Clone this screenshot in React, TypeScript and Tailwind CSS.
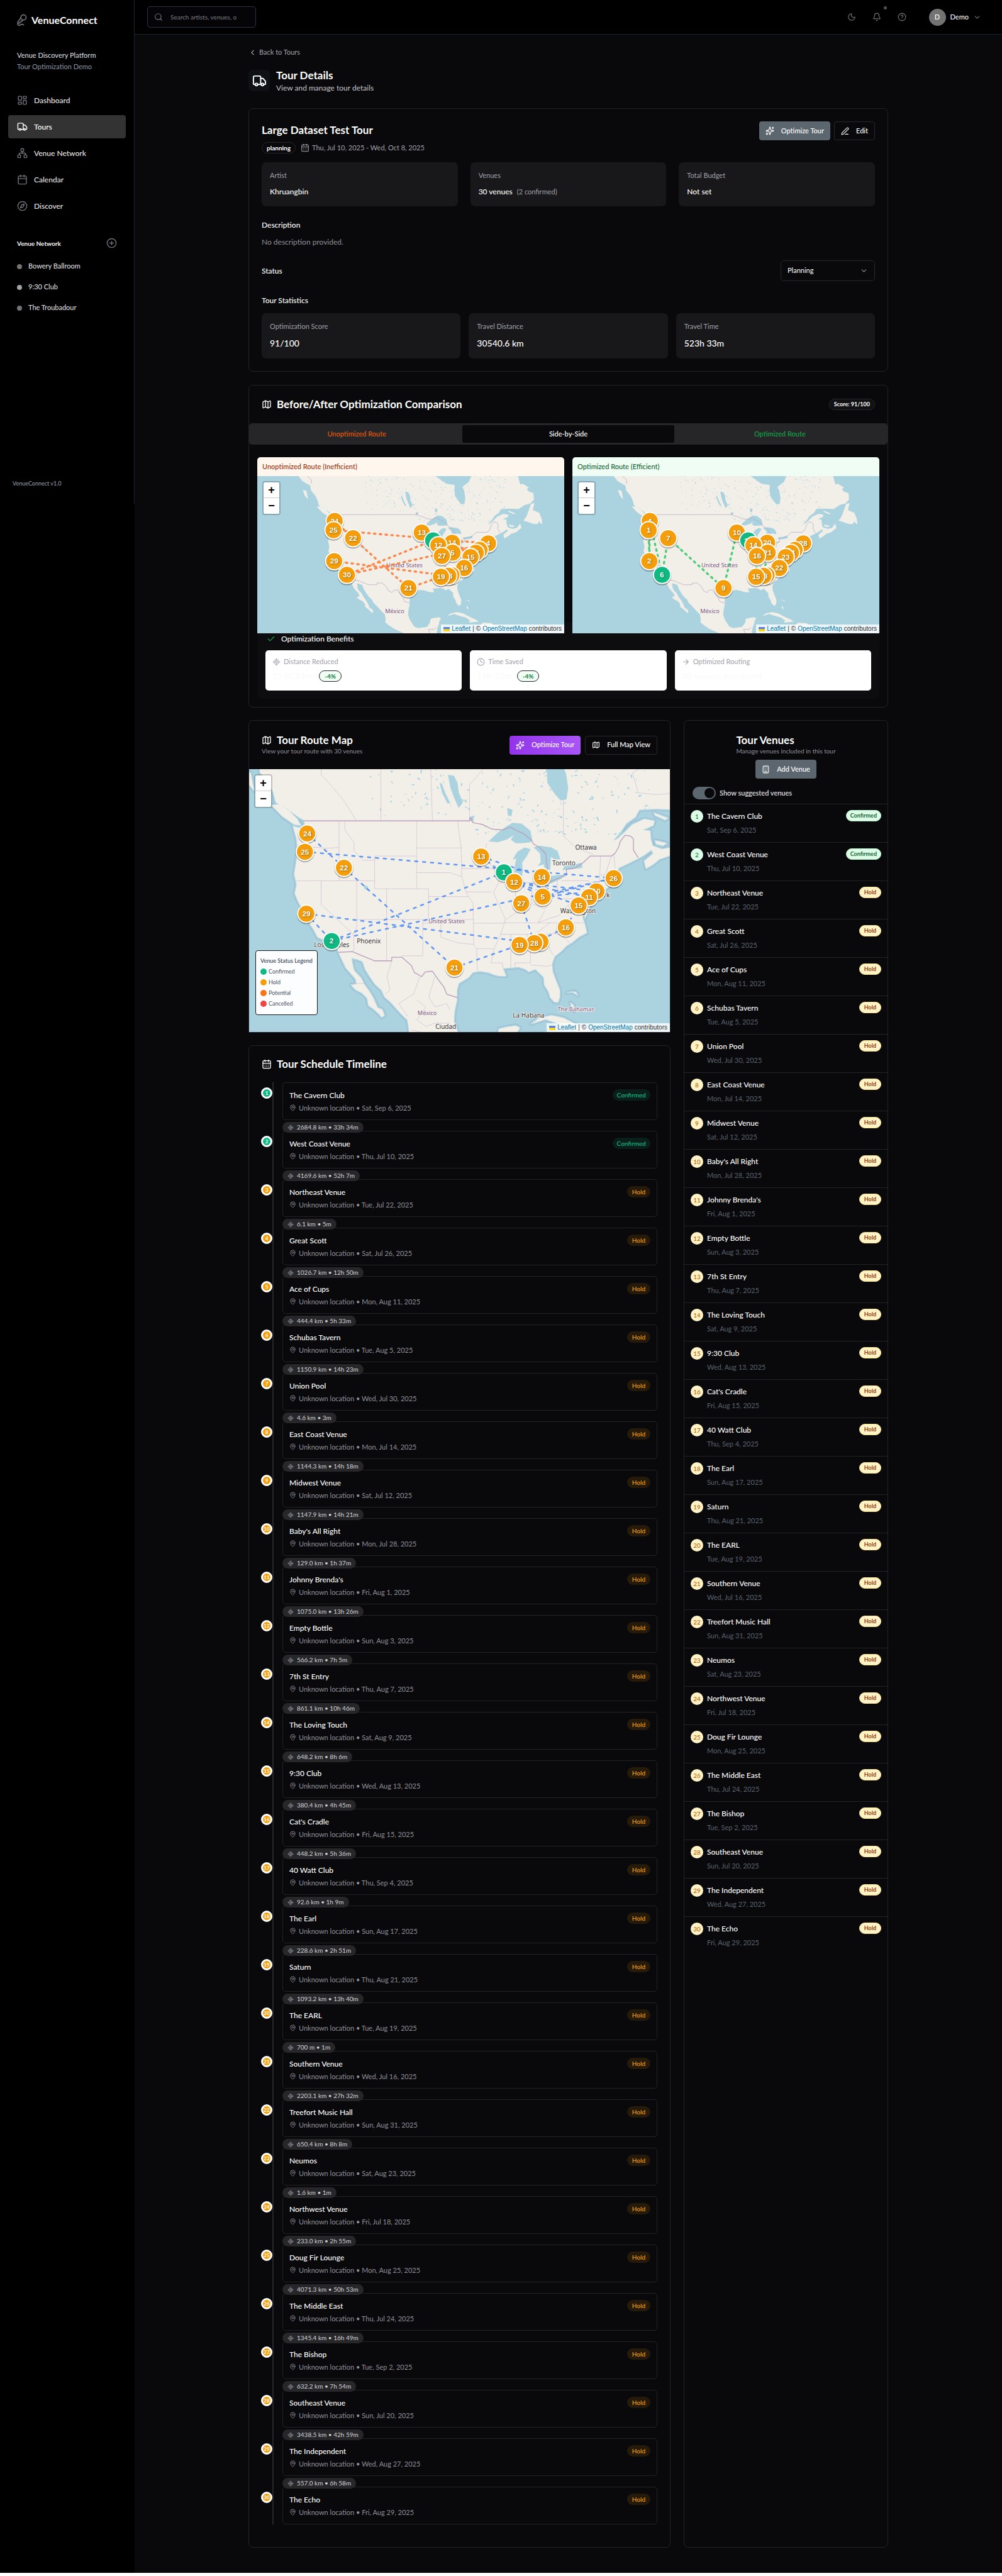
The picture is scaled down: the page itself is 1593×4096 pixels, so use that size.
import React from "react";
import {
  ArrowRight,
  Bell,
  Building,
  Calendar,
  CalendarDays,
  Check,
  ChevronDown,
  ChevronLeft,
  CircleHelp,
  CirclePlus,
  Clock,
  Compass,
  LayoutDashboard,
  LocateFixed,
  Map as MapIcon,
  MapPin,
  MicVocal,
  Moon,
  Network,
  PenLine,
  Search,
  Sparkles,
  Truck,
} from "lucide-react";

type Venue = { name: string; date: string; leg?: string };

const venues: Venue[] = [
  { name: "The Cavern Club", date: "Sat, Sep 6, 2025", leg: "2684.8 km • 33h 34m" },
  { name: "West Coast Venue", date: "Thu, Jul 10, 2025", leg: "4169.6 km • 52h 7m" },
  { name: "Northeast Venue", date: "Tue, Jul 22, 2025", leg: "6.1 km • 5m" },
  { name: "Great Scott", date: "Sat, Jul 26, 2025", leg: "1026.7 km • 12h 50m" },
  { name: "Ace of Cups", date: "Mon, Aug 11, 2025", leg: "444.4 km • 5h 33m" },
  { name: "Schubas Tavern", date: "Tue, Aug 5, 2025", leg: "1150.9 km • 14h 23m" },
  { name: "Union Pool", date: "Wed, Jul 30, 2025", leg: "4.6 km • 3m" },
  { name: "East Coast Venue", date: "Mon, Jul 14, 2025", leg: "1144.3 km • 14h 18m" },
  { name: "Midwest Venue", date: "Sat, Jul 12, 2025", leg: "1147.9 km • 14h 21m" },
  { name: "Baby's All Right", date: "Mon, Jul 28, 2025", leg: "129.0 km • 1h 37m" },
  { name: "Johnny Brenda's", date: "Fri, Aug 1, 2025", leg: "1075.0 km • 13h 26m" },
  { name: "Empty Bottle", date: "Sun, Aug 3, 2025", leg: "566.2 km • 7h 5m" },
  { name: "7th St Entry", date: "Thu, Aug 7, 2025", leg: "861.1 km • 10h 46m" },
  { name: "The Loving Touch", date: "Sat, Aug 9, 2025", leg: "648.2 km • 8h 6m" },
  { name: "9:30 Club", date: "Wed, Aug 13, 2025", leg: "380.4 km • 4h 45m" },
  { name: "Cat's Cradle", date: "Fri, Aug 15, 2025", leg: "448.2 km • 5h 36m" },
  { name: "40 Watt Club", date: "Thu, Sep 4, 2025", leg: "92.6 km • 1h 9m" },
  { name: "The Earl", date: "Sun, Aug 17, 2025", leg: "228.6 km • 2h 51m" },
  { name: "Saturn", date: "Thu, Aug 21, 2025", leg: "1093.2 km • 13h 40m" },
  { name: "The EARL", date: "Tue, Aug 19, 2025", leg: "700 m • 1m" },
  { name: "Southern Venue", date: "Wed, Jul 16, 2025", leg: "2203.1 km • 27h 32m" },
  { name: "Treefort Music Hall", date: "Sun, Aug 31, 2025", leg: "650.4 km • 8h 8m" },
  { name: "Neumos", date: "Sat, Aug 23, 2025", leg: "1.6 km • 1m" },
  { name: "Northwest Venue", date: "Fri, Jul 18, 2025", leg: "233.0 km • 2h 55m" },
  { name: "Doug Fir Lounge", date: "Mon, Aug 25, 2025", leg: "4071.3 km • 50h 53m" },
  { name: "The Middle East", date: "Thu, Jul 24, 2025", leg: "1345.4 km • 16h 49m" },
  { name: "The Bishop", date: "Tue, Sep 2, 2025", leg: "632.2 km • 7h 54m" },
  { name: "Southeast Venue", date: "Sun, Jul 20, 2025", leg: "3438.5 km • 42h 59m" },
  { name: "The Independent", date: "Wed, Aug 27, 2025", leg: "557.0 km • 6h 58m" },
  { name: "The Echo", date: "Fri, Aug 29, 2025" },
];

/* ---------- Map geometry: flat lists of lon,lat pairs ---------- */

const MAINLAND = [
  -136, 60, -136, 58, -134.5, 56.8, -133, 55.8, -130.5, 55, -130.2, 54, -128.8, 53, -128, 52, -127.6, 51, -125.5, 50.2,
  -124, 49.5, -123, 49.1, -122.5, 48.3, -122.3, 47.3, -122.8, 47.3, -122.9, 48.1, -124.7, 48.4, -124.1, 46.9, -124, 46.2,
  -124.1, 44.6, -124.5, 42.8, -124.1, 41.5, -124.4, 40.4, -123.8, 39.3, -123, 38.2, -122.5, 37.7, -121.9, 36.9, -121.9, 36.4,
  -121.3, 35.7, -120.6, 34.6, -119.2, 34.1, -118.4, 33.8, -117.3, 33, -117.1, 32.5, -116.6, 31.6, -115.9, 30.3, -115, 29.4,
  -114.2, 28.6, -114.1, 27.9, -115, 27.8, -114.3, 27.1, -113.2, 26.6, -112.3, 25.8, -112.1, 24.7, -111.3, 24.2, -110.3, 23.4,
  -109.9, 22.9, -109.4, 23.2, -109.8, 24.1, -110.6, 24.4, -111.2, 25.7, -111.9, 26.8, -112.8, 27.9, -113.3, 28.8,
  -114.5, 29.9, -114.8, 31, -114.9, 31.7, -114, 31.5, -113.1, 31.2, -112.6, 30, -111.8, 28.9, -111, 27.9, -109.9, 27,
  -109.4, 26, -108.4, 25.2, -107.6, 24.4, -106.5, 23.3, -105.6, 22.5, -105.4, 21.5, -105.3, 20.6, -105.5, 20, -104.3, 19.1,
  -102.5, 18, -100.8, 17.2, -99.5, 16.7, -97.5, 15.9, -96, 15.7, -94.8, 16.2, -93.5, 15.6, -92.2, 14.5, -91, 13.9, -88, 13,
  -86, 11, -83.5, 11, -83.2, 14.9, -84.5, 15.8, -86.5, 15.8, -88.3, 15.7, -88.2, 17, -88, 18.4, -87.5, 19.5, -87.4, 20.3,
  -86.8, 21.3, -87.5, 21.6, -89, 21.4, -90.3, 21.1, -90.5, 19.9, -91.5, 18.6, -93, 18.4, -94.5, 18.2, -95.8, 18.7,
  -96.4, 19.6, -97.2, 20.7, -97.8, 22.3, -97.7, 23.8, -97.3, 25.5, -97.3, 27, -97, 28, -95.3, 28.9, -94.7, 29.6, -93.5, 29.8,
  -92, 29.6, -91.2, 29.3, -90.2, 29.1, -89.1, 29.1, -89.6, 30.2, -88.1, 30.3, -87, 30.4, -85.9, 30.1, -85.3, 29.7,
  -84.2, 30.1, -83.5, 29.5, -82.8, 28.9, -82.7, 27.8, -82, 26.8, -81.7, 25.9, -81, 25.2, -80.4, 25.2, -80.1, 26, -80.1, 27,
  -80.7, 28.3, -81.3, 29.7, -81.4, 30.9, -81, 31.9, -79.8, 32.7, -79, 33.4, -78, 33.9, -77, 34.6, -75.6, 35.2, -76, 36.6,
  -76.3, 37.2, -76.3, 38.6, -76.1, 38.2, -75.9, 37.2, -75.6, 37.7, -75.1, 38.6, -75.5, 39.4, -74.9, 39, -74.1, 39.8, -74, 40.6,
  -72.5, 40.9, -71.9, 41.3, -70.6, 41.6, -70, 41.8, -70.6, 42.3, -70.8, 42.9, -70.2, 43.6, -69, 44, -67, 44.7, -66, 45.1,
  -64.8, 45.7, -64.5, 45.3, -66, 44.4, -65.7, 43.5, -64.5, 44, -63.5, 44.6, -61.5, 45.1, -61, 45.5, -60, 46, -60.4, 47,
  -61.5, 46, -63, 45.8, -64.6, 46.2, -64.9, 47, -65, 47.9, -66.2, 48, -64.5, 48.5, -64.3, 49, -66, 49.2, -68, 48.6,
  -69.5, 47.6, -70.5, 47, -71.2, 46.8, -70, 47.7, -69, 48.7, -67.5, 49.4, -66.8, 50.2, -64, 50.3, -61, 50.2, -58.8, 51.1,
  -57, 51.4, -55.8, 52.2, -56, 53.5, -57.5, 53.8, -58.2, 54.3, -57.5, 54.6, -59.5, 55.3, -60.4, 55.2, -61, 56.5, -62, 58, -62, 60,
];

const ISLANDS = [
  [-128.3, 50.7, -127, 50.8, -125.3, 50.1, -124, 49.2, -123.4, 48.5, -124.5, 48.6, -126.5, 49.5],
  [-133, 54.1, -131.8, 54, -131.2, 52.2, -132.3, 53],
  [-59.3, 47.7, -58.3, 48.6, -57.5, 50, -56.8, 51.3, -55.6, 51.5, -56.2, 50, -54, 49.4, -53.2, 48, -53, 46.8, -54.2, 47.5, -54.5, 46.9, -55.8, 46.9],
  [-84.9, 21.9, -83.5, 22.8, -81.5, 23.2, -79.5, 22.8, -77, 21.6, -75.5, 21, -74.2, 20.2, -77.5, 19.9, -77.2, 20.6, -78.5, 21.5, -81, 22.1, -82.5, 22.6, -83.8, 22.2],
  [-74.4, 18.4, -72.8, 19.9, -70, 19.7, -68.4, 18.6, -70.5, 18.2, -72, 18.2],
  [-78.3, 18.4, -76.8, 18.4, -76.5, 17.9, -77.7, 17.9],
  [-78.3, 25.1, -77.8, 24.7, -77.7, 23.9, -78.2, 24.4],
  [-78.9, 26.6, -77.9, 26.7, -77.1, 26.2, -77.4, 26.7, -78, 26.8],
  [-64.4, 49.9, -62, 49.3, -62.5, 49.1, -64.2, 49.6],
  [-64.2, 46.8, -62.2, 46.5, -62.9, 46.2, -64, 46.4],
];

const WATER = [
  [-94.5, 60, -94.3, 58.8, -93, 58.6, -92.5, 57, -90, 57.2, -88, 56.5, -85, 55.3, -82.3, 55.1, -82.2, 53, -81, 51.9, -80, 51.2, -79, 51.3, -78.7, 52.5, -79.1, 54, -79.7, 54.7, -77.5, 55.7, -76.6, 57, -77.5, 58.5, -78, 60],
  [-92, 46.7, -90.5, 47.7, -89, 48.4, -88, 48.8, -86.5, 48.7, -85, 47.9, -84.7, 46.8, -85, 46.6, -86.5, 46.5, -87.5, 46.5, -88.3, 46.9, -87.8, 47.4, -89, 46.9, -90.5, 46.6],
  [-87.8, 42.2, -87.2, 41.7, -86.5, 42.2, -86.3, 43.2, -86.4, 44.2, -85.6, 45, -85, 45.8, -86, 46, -87.2, 45.5, -88, 44.6, -87.4, 44.7, -87.7, 43.6],
  [-84.5, 46, -83.4, 45.3, -83.3, 44.3, -83.8, 43.8, -82.8, 44, -82.5, 43.1, -81.7, 43.4, -81.6, 44.9, -81, 44.6, -80, 44.6, -80.5, 45.6, -81.5, 46, -83.5, 46.2],
  [-83.4, 41.8, -82.5, 41.5, -81.5, 41.7, -80, 42.2, -78.9, 42.8, -80.3, 42.7, -81.5, 42.6, -82.6, 42],
  [-79.7, 43.3, -78, 43.4, -76.3, 43.6, -76.5, 44.2, -78, 43.9, -79.3, 43.8],
  [-97, 50.4, -96.3, 51, -97, 52, -97.2, 53, -97.8, 53.7, -98.8, 53.8, -98.4, 52.5, -97.8, 51.5],
  [-100.2, 53, -99.8, 52.9, -99.2, 51.9, -98.4, 50.9, -98.9, 50.9, -99.8, 52],
  [-112.9, 41.5, -112.2, 41.3, -112.2, 40.8, -112.8, 41],
  [-95.2, 49.4, -94.4, 49.6, -94.6, 48.9, -95.2, 49],
  [-88.9, 50.4, -88, 50.2, -88.2, 49.5, -88.8, 49.6],
];

const BORDERS = [
  [-123, 49, -95.2, 49, -95.1, 49.4, -94.6, 48.8, -93, 48.6, -91.5, 48.1, -89.6, 48, -88.4, 48.3, -86, 47.5, -84.8, 46.8, -84.5, 46.4, -83.5, 46, -82.5, 45.3, -82.2, 43.6, -82.5, 42.6, -83.1, 42.1, -82, 41.8, -79, 42.7, -79, 43.4, -77.5, 43.6, -76.4, 44.1, -75, 45, -71.5, 45, -70.9, 45.3, -70.3, 46, -70, 46.7, -69.2, 47.4, -68.3, 47.3, -67.8, 47, -67.8, 45.7, -67, 44.8],
  [-117.1, 32.5, -114.8, 32.6, -111.1, 31.3, -108.2, 31.3, -108.2, 31.8, -106.5, 31.8, -104.9, 30.6, -104.4, 29.6, -103.2, 29, -102.6, 29.7, -101.4, 29.8, -100.3, 28.4, -99.5, 27.5, -99, 26.4, -97.2, 25.9],
  [-92.2, 14.5, -91.8, 16.1, -90.4, 16.1, -91, 17.8, -89.1, 17.8, -88.4, 18.5],
  [-130.2, 55.3, -130, 56, -132, 57, -133.5, 58.5, -135, 59.5],
];

const STATES = [
  [-124, 46.2, -119, 45.9, -117, 46],
  [-117, 49, -117, 42],
  [-124.2, 42, -111, 42],
  [-120, 42, -120, 39, -114.6, 35, -114.5, 33, -114.8, 32.5],
  [-114.05, 42, -114.05, 36, -114.6, 35],
  [-114.05, 37, -94.6, 37],
  [-109.05, 41, -109.05, 31.3],
  [-111.05, 45, -111.05, 41, -102.05, 41],
  [-111.05, 45, -104.05, 45],
  [-116.05, 49, -116.05, 48, -114.5, 46.6, -114.5, 45.6, -113, 44.5, -111.05, 44.5],
  [-104.05, 49, -104.05, 41],
  [-104.05, 45.94, -96.5, 45.94],
  [-104.05, 43, -98.5, 43, -96.5, 42.5, -95.8, 40.6, -94.6, 39.1],
  [-102.05, 40, -95.3, 40],
  [-102.05, 41, -102.05, 37],
  [-103, 37, -103, 32, -106.6, 32],
  [-103, 36.5, -100, 36.5, -100, 34.6, -97, 33.8, -94.5, 33.6],
  [-97.2, 49, -96.6, 46, -96.5, 42.5],
  [-96.5, 43.5, -91.2, 43.5],
  [-95.8, 40.6, -91.5, 40.6],
  [-94.6, 36.5, -89.5, 36.5],
  [-94.6, 39.1, -94.5, 33.6, -94, 33, -93.9, 29.8],
  [-92.3, 46.5, -92.8, 45, -91.2, 43.5, -90.2, 42, -91.2, 40.5, -90.2, 38.8, -89.2, 37, -90, 35, -91.1, 33, -91.6, 31, -89.7, 31, -89.6, 30.2],
  [-94, 33, -91.1, 33],
  [-90.6, 42.5, -87.8, 42.5],
  [-87.5, 41.7, -87.5, 38],
  [-89.1, 37, -87.5, 37.9, -85.7, 38.2, -84.8, 39.1, -82.6, 38.4, -80.6, 40.6],
  [-84.8, 41.7, -84.8, 39.1],
  [-87, 41.75, -83.4, 41.75],
  [-80.52, 42, -80.52, 39.72, -75.6, 39.72],
  [-79.8, 42, -75.3, 42, -74.7, 41.4, -75.2, 40],
  [-89.5, 36.55, -75.9, 36.55],
  [-90, 35, -83.2, 35, -81, 35.1, -79.6, 34.8, -78.5, 33.8],
  [-88.3, 35, -88.3, 30.3],
  [-85.6, 35, -85, 32.3, -85, 31, -87.6, 31, -87.6, 30.3],
  [-85, 30.7, -82.2, 30.5, -81.4, 30.7],
  [-83.2, 35, -81.2, 32.1],
  [-84.3, 35, -81.7, 36.6],
  [-82.6, 38.2, -83.7, 36.6, -81.7, 37.2, -80.3, 37.5, -79, 38.7, -77.8, 39.3],
  [-71.5, 45, -72.5, 42.7],
  [-73.3, 45, -73.5, 41.1],
  [-73.3, 42.7, -71, 42.8],
  [-73.4, 42.03, -71.8, 42.03, -71.8, 41.4],
  [-71.1, 45.3, -70.8, 43.1],
  [-120, 60, -120, 53.8, -118, 52.5, -116, 51, -114.1, 49],
  [-110, 60, -110, 49],
  [-102, 60, -101.4, 49],
  [-95.2, 49, -95.2, 52.8, -92, 55, -88.9, 56.9],
  [-79.5, 51.3, -79.5, 47.3, -77.3, 45.9, -74.5, 45.2],
  [-67.5, 52, -64, 51.8, -60, 52, -57, 51.5],
  [-67, 52, -68, 54, -65, 55],
  [-108.2, 31.3, -109, 29, -108.5, 27, -109.3, 26.4],
  [-103.5, 29, -104.5, 26.5, -107, 25, -105.5, 23],
  [-101, 29, -102, 26, -101, 24.5, -99, 25, -98.5, 24],
  [-104, 25.5, -102.5, 24.5, -104, 22.5, -102.5, 21.5, -101, 22, -98.5, 22],
  [-105, 21, -103, 20.5, -101.5, 20, -100, 20.5, -98.5, 19.5, -97, 19],
  [-114.9, 28, -112.8, 28],
];

const project = (lon: number, lat: number): [number, number] => [
  110.9 + (lon + 122.33) * 11.378,
  122.4 + (0.947 - Math.asinh(Math.tan((lat * Math.PI) / 180))) * 651.9,
];

const pathOf = (flat: number[], close: boolean) => {
  let d = "";
  for (let i = 0; i < flat.length; i += 2) {
    const [x, y] = project(flat[i], flat[i + 1]);
    d += (i ? "L" : "M") + x.toFixed(1) + " " + y.toFixed(1);
  }
  return close ? d + "Z" : d;
};

/* Scattered small lakes of the Canadian Shield */
const lakes = (() => {
  let seed = 7;
  const next = () => {
    seed = (seed * 16807) % 2147483647;
    return seed / 2147483647;
  };
  const list: { x: number; y: number; rx: number; ry: number; a: number }[] = [];
  for (let i = 0; i < 300; i++) {
    const lat = 47.5 + next() * 10;
    const lon = lat < 49.5 ? -94 + next() * 24 : -112 + next() * 47;
    const [x, y] = project(lon, lat);
    list.push({ x, y, rx: 0.8 + next() * 3, ry: 0.5 + next() * 1.1, a: next() * 180 });
  }
  return list;
})();

const sites: Record<string, [number, number]> = {
  seattle: [110.9, 122.4],
  portland: [106.6, 157.2],
  boise: [180.8, 187.6],
  sf: [109.3, 275],
  la: [157.5, 326.8],
  minneapolis: [441.7, 166.3],
  milwaukee: [485, 196.3],
  detroit: [557, 205],
  chicago: [504.7, 214.5],
  boston: [693.7, 207.4],
  newyork: [661, 232.3],
  philly: [647, 243.4],
  columbus: [558.7, 242.6],
  bloomington: [518, 255.2],
  dc: [627, 259.2],
  carrboro: [602.7, 301],
  athens: [554.5, 328],
  atlanta: [542.8, 330.8],
  birmingham: [514.8, 334.3],
  austin: [391, 377.4],
};

type Label = [site: string, text: string, green?: boolean];
type Leg = [string, string];

const fullLabels: Label[] = [
  ["seattle", "24"], ["portland", "25"], ["boise", "22"], ["sf", "29"], ["la", "2", true], ["minneapolis", "13"],
  ["milwaukee", "1", true], ["detroit", "14"], ["chicago", "12"], ["boston", "26"], ["newyork", "10"],
  ["columbus", "5"], ["philly", "11"], ["bloomington", "27"], ["dc", "15"], ["carrboro", "16"], ["athens", ""], ["atlanta", "28"],
  ["birmingham", "19"], ["austin", "21"],
];
const beforeLabels: Label[] = [
  ["seattle", "24"], ["portland", "25"], ["boise", "22"], ["sf", "29"], ["la", "30"], ["minneapolis", "13"],
  ["milwaukee", "", true], ["detroit", "14"], ["chicago", "12"], ["boston", "4"], ["newyork", ""],
  ["columbus", "5"], ["philly", "11"], ["bloomington", "27"], ["dc", "15"], ["carrboro", "16"], ["athens", ""], ["atlanta", "18"],
  ["birmingham", "19"], ["austin", "21"],
];
const afterLabels: Label[] = [
  ["seattle", "4"], ["portland", "1"], ["boise", "7"], ["sf", "2"], ["la", "6", true], ["minneapolis", "10"],
  ["milwaukee", "12", true], ["detroit", "20"], ["chicago", "14"], ["boston", "28"], ["newyork", ""],
  ["columbus", "21"], ["philly", "24"], ["bloomington", "16"], ["dc", "23"], ["carrboro", "22"], ["athens", ""], ["atlanta", "18"],
  ["birmingham", "15"], ["austin", "9"],
];

const fullLegs: Leg[] = [
  ["seattle", "boise"], ["boise", "austin"], ["austin", "birmingham"], ["portland", "boston"], ["milwaukee", "la"],
  ["la", "boston"], ["sf", "la"], ["sf", "atlanta"], ["bloomington", "atlanta"], ["atlanta", "carrboro"], ["carrboro", "dc"],
  ["minneapolis", "chicago"], ["minneapolis", "detroit"], ["chicago", "dc"], ["chicago", "newyork"], ["chicago", "columbus"],
  ["chicago", "philly"], ["columbus", "newyork"], ["columbus", "boston"],
];
const afterLegs: Leg[] = [
  ["portland", "sf"], ["seattle", "sf"], ["seattle", "la"], ["la", "boise"], ["boise", "austin"], ["austin", "minneapolis"],
  ["bloomington", "birmingham"], ["chicago", "atlanta"], ["columbus", "atlanta"], ["columbus", "carrboro"], ["dc", "boston"],
];

type PlaceLabel = { x: number; y: number; text: string; country?: boolean };

function RouteMap({
  width,
  height,
  scale,
  labels,
  legs,
  color,
  places,
  detail,
  title,
}: {
  width: number;
  height: number;
  scale: number;
  labels: Label[];
  legs: Leg[];
  color: string;
  places: PlaceLabel[];
  detail?: boolean;
  title: string;
}) {
  const ox = scale === 1 ? 0 : 147 - 110.9 * scale;
  const oy = scale === 1 ? 0 : 85.5 - 122.4 * scale;
  const at = (site: string) => [ox + sites[site][0] * scale, oy + sites[site][1] * scale];
  return (
    <svg viewBox={`0 0 ${width} ${height}`} preserveAspectRatio="xMidYMid slice" className="block h-full w-full" role="img" aria-label={title}>
      <rect width={width} height={height} fill="#aad3df" />
      <g transform={`translate(${ox} ${oy}) scale(${scale})`} strokeLinejoin="round">
        {detail && (
          <g fill="none" stroke="#8f9fc4" strokeWidth="7" opacity="0.75">
            {[MAINLAND, ...ISLANDS].map((s, i) => (
              <path key={i} d={pathOf(s, true)} />
            ))}
          </g>
        )}
        {detail && (
          <g fill="none" stroke="#aad3df" strokeWidth="5.4">
            {[MAINLAND, ...ISLANDS].map((s, i) => (
              <path key={i} d={pathOf(s, true)} />
            ))}
          </g>
        )}
        <g fill="#f2efe9">
          {[MAINLAND, ...ISLANDS].map((s, i) => (
            <path key={i} d={pathOf(s, true)} />
          ))}
        </g>
        <g fill="#aad3df">
          {lakes.map((l, i) => (
            <ellipse key={i} cx={l.x} cy={l.y} rx={l.rx} ry={l.ry} transform={`rotate(${l.a} ${l.x} ${l.y})`} />
          ))}
          {WATER.map((s, i) => (
            <path key={i} d={pathOf(s, true)} />
          ))}
        </g>
        {detail && (
          <g fill="none" stroke="#c9b3cc" strokeWidth="0.9" opacity="0.8">
            {STATES.map((s, i) => (
              <path key={i} d={pathOf(s, false)} />
            ))}
          </g>
        )}
        <g fill="none" stroke="#b99fbd" strokeWidth={1.6}>
          {BORDERS.map((s, i) => (
            <path key={i} d={pathOf(s, false)} />
          ))}
        </g>
      </g>
      <g fontFamily='"Noto Sans", sans-serif' textAnchor="middle" stroke="#f7f5f1" strokeWidth="2" paintOrder="stroke">
        {places.map((p) => (
          <text key={p.text} x={p.x} y={p.y + 4} fontSize={p.country ? 11 : 12} fill={p.country ? "#7d5580" : "#333333"}>
            {p.text}
          </text>
        ))}
      </g>
      <g stroke={color} strokeWidth={detail ? 3 : 4} strokeLinecap="round" strokeDasharray={detail ? "5 10" : "3 8"} opacity="0.8">
        {legs.map(([a, b], i) => {
          const [x1, y1] = at(a);
          const [x2, y2] = at(b);
          return <line key={i} x1={x1} y1={y1} x2={x2} y2={y2} />;
        })}
      </g>
      {labels.map(([site, text, green]) => {
        const [x, y] = at(site);
        return (
          <g key={site}>
            <circle cx={x} cy={y + 2.5} r="17.5" fill="#000" opacity="0.2" />
            <circle cx={x} cy={y + 1} r="18.5" fill="#000" opacity="0.15" />
            <circle cx={x} cy={y} r="16.5" fill={green ? "#10b981" : "#f59e0b"} stroke="#fff" strokeWidth="2.4" />
            {text && (
              <text
                x={x}
                y={y + 5}
                fontSize="14"
                fontWeight="700"
                textAnchor="middle"
                fontFamily='"Liberation Sans", sans-serif'
                fill="#fff"
                className="[filter:drop-shadow(1px_1px_1px_rgba(0,0,0,0.4))]"
              >
                {text}
              </text>
            )}
          </g>
        );
      })}
    </svg>
  );
}

function MapControls() {
  return (
    <>
      <div className="absolute top-2 left-2 flex flex-col overflow-hidden rounded-[4px] border-2 border-black/20 bg-clip-padding">
        <button type="button" aria-label="Zoom in" className="flex h-[25px] w-[25px] items-center justify-center border-b border-[#cccccc] bg-white font-['Liberation_Sans',sans-serif] text-[18px] font-bold text-black">
          +
        </button>
        <button type="button" aria-label="Zoom out" className="flex h-[25px] w-[25px] items-center justify-center bg-white font-['Liberation_Sans',sans-serif] text-[18px] font-bold text-black">
          −
        </button>
      </div>
      <div className="absolute right-0 bottom-0 flex h-[14px] items-center gap-[3px] bg-white/80 px-1 font-['Liberation_Sans',sans-serif] text-[10px] leading-[14px] text-[#333333]">
        <svg viewBox="0 0 12 8" className="h-[7px] w-[10px]" aria-hidden="true">
          <path fill="#4C7BE1" d="M0 0h12v4H0z" />
          <path fill="#FFD500" d="M0 4h12v4H0z" />
        </svg>
        <a href="#leaflet" className="text-[#0078a8]">Leaflet</a>
        <span>|</span>
        <span>©</span>
        <a href="#osm" className="text-[#0078a8]">OpenStreetMap</a>
        <span>contributors</span>
      </div>
    </>
  );
}

/* ---------- Shell ---------- */

const navItems = [
  { label: "Dashboard", icon: LayoutDashboard },
  { label: "Tours", icon: Truck, active: true },
  { label: "Venue Network", icon: Network },
  { label: "Calendar", icon: Calendar },
  { label: "Discover", icon: Compass },
];

function Sidebar() {
  return (
    <aside className="w-[214px] shrink-0 bg-black">
      <div className="flex h-[801px] flex-col border-r border-[#1b232e]">
        <div className="flex h-[63px] items-center gap-[6px] pl-6">
          <MicVocal className="size-[20px] text-[#71717a]" strokeWidth={2} />
          <span className="text-[16px] leading-6 font-bold text-white">VenueConnect</span>
        </div>
        <div className="mt-4 pl-[27px]">
          <p className="text-[11px] leading-[18px] font-medium text-[#d1d5db]">Venue Discovery Platform</p>
          <p className="text-[11px] leading-[18px] text-[#8b93a1]">Tour Optimization Demo</p>
        </div>
        <nav className="mt-[26px] flex flex-col gap-[5px] px-[13px]">
          {navItems.map(({ label, icon: Icon, active }) => (
            <a
              key={label}
              href="#nav"
              className={
                active
                  ? "flex h-[37px] items-center gap-[10px] rounded-[4px] bg-[#333333] px-[14px] text-[12px] font-medium text-white"
                  : "flex h-[37px] items-center gap-[10px] rounded-[4px] px-[14px] text-[12px] font-medium text-[#e5e5e5]"
              }
            >
              <Icon className={active ? "size-[17px] text-white" : "size-[17px] text-[#71717a]"} strokeWidth={2} />
              {label}
            </a>
          ))}
        </nav>
        <div className="mt-[32px] flex items-center justify-between pr-[27px] pl-[27px]">
          <h2 className="text-[10px] leading-4 font-bold text-[#f4f4f5]">Venue Network</h2>
          <button type="button" aria-label="Add venue to network">
            <CirclePlus className="size-[17px] text-[#71717a]" strokeWidth={2} />
          </button>
        </div>
        <ul className="mt-[12px] flex flex-col pl-[27px]">
          {["Bowery Ballroom", "9:30 Club", "The Troubadour"].map((name, i) => (
            <li key={name} className="flex h-[33px] items-center gap-[10px] text-[11px] text-[#e5e5e5]">
              <span className={i === 1 ? "size-2 rounded-full bg-[#a3a3a3]" : "size-2 rounded-full bg-[#737373]"} />
              {name}
            </li>
          ))}
        </ul>
        <p className="mt-auto mb-[24px] pl-5 text-[9px] leading-4 text-[#9ca3af]">VenueConnect v1.0</p>
      </div>
    </aside>
  );
}

function TopBar() {
  return (
    <header className="flex h-[55px] items-center justify-between border-b border-[#1b232e] bg-black pr-[33px] pl-[20px]">
      <label className="flex h-[34px] w-[173px] items-center gap-3 rounded-[5px] border border-[#283445] bg-[#050507] px-[10px]">
        <Search className="size-[14px] shrink-0 text-[#71717a]" strokeWidth={2} />
        <input
          type="text"
          aria-label="Search artists, venues, or cities"
          placeholder="Search artists, venues, o"
          className="w-full min-w-0 bg-transparent text-[10px] text-white outline-none placeholder:text-[#7c7c84]"
        />
      </label>
      <div className="flex items-center">
        <div className="flex items-center gap-[26px]">
          <button type="button" aria-label="Toggle theme">
            <Moon className="size-[14px] text-[#71717a]" strokeWidth={2} />
          </button>
          <button type="button" aria-label="Notifications" className="relative">
            <Bell className="size-[14px] text-[#71717a]" strokeWidth={2} />
            <span className="absolute -top-[10px] -right-[9px] size-[5px] rounded-full bg-[#525252]" />
          </button>
          <button type="button" aria-label="Help">
            <CircleHelp className="size-[14px] text-[#71717a]" strokeWidth={2} />
          </button>
        </div>
        <button type="button" className="ml-9 flex items-center gap-[7px] text-[11px] font-medium text-[#f4f4f5]">
          <span className="flex size-[27px] items-center justify-center rounded-full bg-[#737373] text-[11px] text-white">D</span>
          Demo
          <ChevronDown className="size-[13px] text-[#71717a]" strokeWidth={2} />
        </button>
      </div>
    </header>
  );
}

/* ---------- Tour overview ---------- */

function StatBox({ label, children, large }: { label: string; children: React.ReactNode; large?: boolean }) {
  return (
    <div className="rounded-[7px] bg-[#18181a] p-[13px]">
      <p className="text-[11px] leading-4 text-[#a1a1aa]">{label}</p>
      <p className={large ? "mt-2 text-[14px] leading-[22px] font-medium text-white" : "mt-2 text-[12px] leading-5 font-medium text-white"}>{children}</p>
    </div>
  );
}

function TourSummary() {
  return (
    <section className="mt-[22px] rounded-[7px] border border-[#232326] p-5">
      <div className="flex items-start justify-between">
        <div>
          <h2 className="text-[17px] leading-7 font-bold text-white">Large Dataset Test Tour</h2>
          <div className="mt-[5px] flex h-[18px] items-center">
            <span className="flex h-[18px] items-center rounded-full border border-[#27272a] px-[7px] text-[10px] font-bold text-white">planning</span>
            <CalendarDays className="ml-2 size-[14px] text-[#a1a1aa]" strokeWidth={1.8} />
            <span className="ml-1 text-[11px] text-[#a1a1aa]">Thu, Jul 10, 2025 - Wed, Oct 8, 2025</span>
          </div>
        </div>
        <div className="flex gap-[6px]">
          <button type="button" className="flex h-[30px] items-center gap-[11px] rounded-[4px] bg-[#5c666f] px-[10px] text-[11px] font-medium text-white">
            <Sparkles className="size-[14px]" strokeWidth={2} />
            Optimize Tour
          </button>
          <button type="button" className="flex h-[30px] items-center gap-[11px] rounded-[4px] border border-[#27272a] px-[10px] text-[11px] font-medium text-white">
            <PenLine className="size-[13px]" strokeWidth={2} />
            Edit
          </button>
        </div>
      </div>
      <div className="mt-[14px] grid grid-cols-3 gap-5">
        <StatBox label="Artist">Khruangbin</StatBox>
        <StatBox label="Venues">
          30 venues <span className="ml-1 text-[11px] font-normal text-[#a1a1aa]">(2 confirmed)</span>
        </StatBox>
        <StatBox label="Total Budget">Not set</StatBox>
      </div>
      <h3 className="mt-[22px] text-[12px] leading-4 font-medium text-white">Description</h3>
      <p className="mt-[9px] text-[12px] leading-5 text-[#8f8f98]">No description provided.</p>
      <div className="mt-[19px] flex items-center justify-between">
        <label htmlFor="status" className="text-[12px] leading-4 font-medium text-white">Status</label>
        <div className="relative">
          <select id="status" defaultValue="Planning" className="h-[33px] w-[150px] appearance-none rounded-[5px] border border-[#27272a] bg-[#09090b] px-[10px] text-[11px] text-white">
            <option>Planning</option>
            <option>Confirmed</option>
            <option>Cancelled</option>
          </select>
          <ChevronDown className="pointer-events-none absolute top-[10px] right-[11px] size-[13px] text-[#8f8f98]" strokeWidth={2} />
        </div>
      </div>
      <h3 className="mt-[23px] text-[12px] leading-4 font-medium text-white">Tour Statistics</h3>
      <div className="mt-3 grid grid-cols-3 gap-[13px]">
        <StatBox label="Optimization Score" large>91/100</StatBox>
        <StatBox label="Travel Distance" large>30540.6 km</StatBox>
        <StatBox label="Travel Time" large>523h 33m</StatBox>
      </div>
    </section>
  );
}

/* ---------- Comparison ---------- */

const smallPlaces: PlaceLabel[] = [
  { x: 279.5, y: 169, text: "United States", country: true },
  { x: 261, y: 256.7, text: "México", country: true },
];

function Benefit({ icon, label, value, change }: { icon: React.ReactNode; label: string; value: string; change?: string }) {
  return (
    <div className="h-16 rounded-[5px] bg-white px-[11px] pt-[10px]">
      <p className="flex items-center gap-[5px] text-[11px] leading-4 text-[#a1a1aa]">
        {icon}
        {label}
      </p>
      <p className="mt-1 flex items-center gap-2 text-[14px] leading-[22px] font-medium text-[#fafafa]">
        {value}
        {change && (
          <span className="flex h-[18px] items-center rounded-full border border-[#27272a] bg-[#f0fdf4] px-2 text-[10px] font-bold text-[#15803d]">{change}</span>
        )}
      </p>
    </div>
  );
}

function Comparison() {
  return (
    <section className="mt-[21px] rounded-[7px] border border-[#232326]">
      <div className="flex h-[60px] items-center justify-between px-5">
        <h2 className="flex items-center gap-2 text-[17px] font-bold text-white">
          <MapIcon className="size-[16px]" strokeWidth={2} />
          Before/After Optimization Comparison
        </h2>
        <span className="flex h-[18px] items-center rounded-full border border-[#27272a] bg-[#111113] px-[7px] text-[9px] font-bold text-white">Score: 91/100</span>
      </div>
      <div role="tablist" className="grid h-[34px] grid-cols-3 rounded-[5px] bg-[#262628] p-[3px] text-[11px] font-medium">
        <button type="button" role="tab" className="text-[#ea580c]">Unoptimized Route</button>
        <button type="button" role="tab" aria-selected="true" className="rounded-[3px] bg-[#09090b] text-white">Side-by-Side</button>
        <button type="button" role="tab" className="text-[#16a34a]">Optimized Route</button>
      </div>
      <div className="px-[13px] pt-5 pb-[13px]">
        <div className="relative z-10 grid grid-cols-2 gap-[13px]">
          <div className="overflow-hidden rounded-t-[5px]">
            <p className="h-[30px] bg-[#fff7ed] px-2 pt-[6px] text-[11px] leading-[18px] font-medium text-[#9a3412]">Unoptimized Route (Inefficient)</p>
            <div className="relative h-[250px]">
              <RouteMap width={583} height={299} scale={0.5} labels={beforeLabels} legs={fullLegs} color="#fb7226" places={smallPlaces} title="Unoptimized route" />
              <MapControls />
            </div>
          </div>
          <div className="overflow-hidden rounded-t-[5px]">
            <p className="h-[30px] bg-[#f0fdf4] px-2 pt-[6px] text-[11px] leading-[18px] font-medium text-[#166534]">Optimized Route (Efficient)</p>
            <div className="relative h-[250px]">
              <RouteMap width={583} height={299} scale={0.5} labels={afterLabels} legs={afterLegs} color="#22c55e" places={smallPlaces} title="Optimized route" />
              <MapControls />
            </div>
          </div>
        </div>
        <div className="-mt-[17px] rounded-[7px] bg-[#0d0d0f] p-[13px] pt-4">
          <h3 className="flex h-5 items-center gap-[9px] pl-[2px] text-[12px] font-medium text-white">
            <Check className="size-[14px] text-[#16a34a]" strokeWidth={2} />
            Optimization Benefits
          </h3>
          <div className="mt-2 grid grid-cols-3 gap-[13px]">
            <Benefit icon={<LocateFixed className="size-[13px]" />} label="Distance Reduced" value="1140.2 km" change="-4%" />
            <Benefit icon={<Clock className="size-[13px]" />} label="Time Saved" value="19h 32m" change="-4%" />
            <Benefit icon={<ArrowRight className="size-[13px]" />} label="Optimized Routing" value="30 venues reordered" />
          </div>
        </div>
      </div>
    </section>
  );
}

/* ---------- Route map card ---------- */

const fullPlaces: PlaceLabel[] = [
  { x: 376, y: 288.5, text: "United States", country: true },
  { x: 339, y: 463.6, text: "México", country: true },
  { x: 622, y: 456.5, text: "The Bahamas", country: true },
  { x: 374.5, y: 490.5, text: "Ciudad" },
  { x: 532, y: 468, text: "La Habana" },
  { x: 641, y: 149, text: "Ottawa" },
  { x: 599, y: 179, text: "Toronto" },
  { x: 626, y: 269.5, text: "Washington" },
  { x: 660, y: 240, text: "New York" },
  { x: 228, y: 327, text: "Phoenix" },
  { x: 157.5, y: 335, text: "Los Angeles" },
];

function RouteCard() {
  return (
    <section className="rounded-t-[7px] border border-[#232326]">
      <div className="flex h-[77px] items-center justify-between px-5">
        <div>
          <h2 className="flex items-center gap-2 text-[17px] leading-5 font-bold text-white">
            <MapIcon className="size-[16px]" strokeWidth={2} />
            Tour Route Map
          </h2>
          <p className="text-[10px] leading-[15px] text-[#8f8f98]">View your tour route with 30 venues</p>
        </div>
        <div className="flex gap-[7px]">
          <button type="button" className="flex h-[30px] items-center gap-[11px] rounded-[4px] bg-linear-to-r from-[#9333ea] to-[#a855f7] px-[10px] text-[11px] font-medium text-white">
            <Sparkles className="size-[14px]" strokeWidth={2} />
            Optimize Tour
          </button>
          <button type="button" className="flex h-[30px] items-center gap-[11px] rounded-[4px] border border-[#27272a] px-[10px] text-[11px] font-medium text-white">
            <MapIcon className="size-[13px]" strokeWidth={2} />
            Full Map View
          </button>
        </div>
      </div>
      <div className="relative h-[418px]">
        <RouteMap width={801} height={500} scale={1} labels={fullLabels} legs={fullLegs} color="#3b82f6" places={fullPlaces} detail title="Tour route" />
        <MapControls />
        <div className="absolute bottom-[27px] left-[10px] rounded-[4px] border border-[#18181b] bg-white/95 px-[7px] pt-2 pb-[9px]">
          <p className="text-[9px] leading-[16px] font-medium text-[#374151]">Venue Status Legend</p>
          <ul className="flex flex-col text-[9px] leading-[17px] text-[#4b5563]">
            <li className="flex items-center gap-[3px]"><span className="size-[10px] rounded-full bg-[#10b981]" />Confirmed</li>
            <li className="flex items-center gap-[3px]"><span className="size-[10px] rounded-full bg-[#f59e0b]" />Hold</li>
            <li className="flex items-center gap-[3px]"><span className="size-[10px] rounded-full bg-[#f97316]" />Potential</li>
            <li className="flex items-center gap-[3px]"><span className="size-[10px] rounded-full bg-[#ef4444]" />Cancelled</li>
          </ul>
        </div>
      </div>
    </section>
  );
}

/* ---------- Timeline ---------- */

function Timeline() {
  return (
    <section className="grow rounded-[7px] border border-[#232326]">
      <h2 className="flex h-[58px] items-center gap-2 px-5 text-[17px] font-bold text-white">
        <CalendarDays className="size-[16px]" strokeWidth={2} />
        Tour Schedule Timeline
      </h2>
      <div className="pr-5 pb-8 pl-[37px]">
        <ol className="border-l-2 border-[#27272a]">
          {venues.map((v, i) => (
            <li key={v.name + i} className="relative pl-[14px]">
              <span
                className={
                  i < 2
                    ? "absolute top-2 -left-5 flex size-[18px] items-center justify-center rounded-full border-[3px] border-white bg-[#10b981] text-[8px] font-bold text-white"
                    : "absolute top-2 -left-5 flex size-[18px] items-center justify-center rounded-full border-[3px] border-white bg-[#f59e0b] text-[8px] font-bold text-white"
                }
              >
                {i + 1}
              </span>
              <div className="flex h-[60px] items-start justify-between rounded-[5px] border border-[#232326] px-[10px] pt-[10px]">
                <div>
                  <h3 className="text-[12px] leading-[19px] font-medium text-white">{v.name}</h3>
                  <p className="mt-[3px] flex items-center gap-1 text-[11px] leading-[15px] text-[#8f8f98]">
                    <MapPin className="size-[11px]" strokeWidth={2} />
                    Unknown location • {v.date}
                  </p>
                </div>
                <span
                  className={
                    i < 2
                      ? "flex h-[18px] items-center rounded-full bg-[#0a1f1a] px-[7px] text-[10px] font-medium text-[#10b981]"
                      : "flex h-[18px] items-center rounded-full bg-[#261b0b] px-[8px] text-[10px] font-medium text-[#f59e0b]"
                  }
                >
                  {i < 2 ? "Confirmed" : "Hold"}
                </span>
              </div>
              {v.leg && (
                <p className="relative z-10 mt-[3px] -mb-[3px] flex h-[17px] w-fit items-center gap-[5px] rounded-full bg-[#27272a] px-2 text-[10px] text-[#d4d4d8]">
                  <LocateFixed className="size-[10px] text-[#8f8f98]" strokeWidth={2} />
                  {v.leg}
                </p>
              )}
            </li>
          ))}
        </ol>
      </div>
    </section>
  );
}

/* ---------- Venue list ---------- */

function VenuePanel() {
  return (
    <section className="rounded-[7px] border border-[#232326]">
      <div className="flex flex-col items-center border-b border-[#232326] pt-[21px] pb-[7px]">
        <div>
          <h2 className="text-[17px] leading-5 font-bold text-white">Tour Venues</h2>
          <p className="text-[10px] leading-[15px] text-[#8f8f98]">Manage venues included in this tour</p>
        </div>
        <button type="button" className="mt-[6px] flex h-[30px] items-center gap-[11px] rounded-[4px] bg-[#5c666f] px-[10px] text-[11px] font-medium text-white">
          <Building className="size-[13px]" strokeWidth={2} />
          Add Venue
        </button>
        <label className="mt-[13px] flex w-full items-center gap-[6px] pl-[13px] text-[11px] leading-5 font-medium text-[#e4e4e7]">
          <input type="checkbox" defaultChecked className="peer sr-only" />
          <span className="flex h-5 w-[37px] items-center justify-end rounded-full bg-[#5c666f] p-[2px]">
            <span className="size-4 rounded-full bg-[#09090b]" />
          </span>
          Show suggested venues
        </label>
      </div>
      <ul className="divide-y divide-[#232326]">
        {venues.map((v, i) => (
          <li key={v.name + i} className="flex items-start px-[10px] pt-[9px] pb-3">
            <span
              className={
                i < 2
                  ? "flex size-5 shrink-0 items-center justify-center rounded-full bg-[#dcfce7] text-[10px] font-medium text-[#15803d]"
                  : "flex size-5 shrink-0 items-center justify-center rounded-full bg-[#fef3c7] text-[10px] font-medium text-[#c2680c]"
              }
            >
              {i + 1}
            </span>
            <div className="ml-[6px] grow">
              <h3 className="text-[12px] leading-5 font-medium text-white">{v.name}</h3>
              <p className="mt-1 text-[11px] leading-[15px] text-[#5b6270]">{v.date}</p>
            </div>
            <span
              className={
                i < 2
                  ? "flex h-[18px] items-center rounded-full border border-[#bbf7d0] bg-[#dcfce7] px-[6px] text-[9px] font-bold text-[#166534]"
                  : "flex h-[18px] items-center rounded-full border border-[#fde68a] bg-[#fef3c7] px-[7px] text-[9px] font-bold text-[#92400e]"
              }
            >
              {i < 2 ? "Confirmed" : "Hold"}
            </span>
          </li>
        ))}
      </ul>
    </section>
  );
}

export default function App() {
  return (
    <div className="flex min-h-screen flex-col bg-white font-['Lato',sans-serif]">
      <div className="mb-[5px] flex grow bg-[#09090b]">
        <Sidebar />
        <div className="flex min-w-0 grow flex-col">
          <TopBar />
          <main className="mx-auto flex w-full max-w-[1017px] grow flex-col pt-5 pb-10">
            <a href="#tours" className="flex h-4 items-center gap-1 text-[11px] text-[#a1a1aa]">
              <ChevronLeft className="size-[13px]" strokeWidth={2} />
              Back to Tours
            </a>
            <div className="mt-[19px] flex items-start gap-[10px]">
              <div className="mt-px flex size-[34px] items-center justify-center rounded-[6px] bg-[#101114]">
                <Truck className="size-[23px] text-white" strokeWidth={2} />
              </div>
              <div>
                <h1 className="text-[17px] leading-5 font-bold text-white">Tour Details</h1>
                <p className="text-[12px] leading-5 text-[#c4c4ca]">View and manage tour details</p>
              </div>
            </div>
            <TourSummary />
            <Comparison />
            <div className="mt-5 grid grow grid-cols-[671fr_325fr] gap-x-[21px]">
              <div className="flex min-w-0 flex-col gap-5">
                <RouteCard />
                <Timeline />
              </div>
              <VenuePanel />
            </div>
          </main>
        </div>
      </div>
    </div>
  );
}
